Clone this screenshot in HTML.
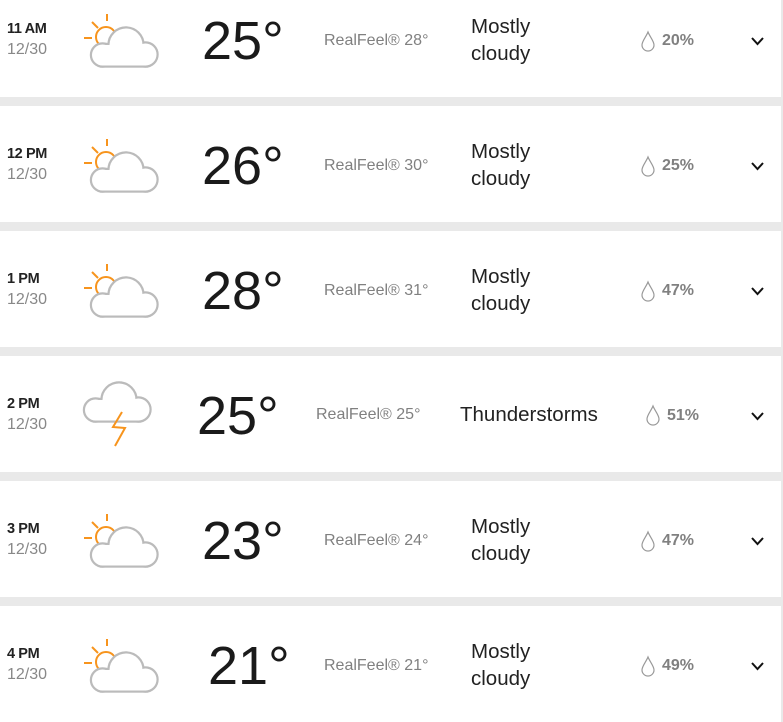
<!DOCTYPE html>
<html><head><meta charset="utf-8"><style>
body{margin:0;width:783px;height:703px;background:#e9e9e9;position:relative;overflow:hidden;font-family:"Liberation Sans",sans-serif}
.card{position:absolute;left:0;width:781px;height:116px;background:#fff}
.t{position:absolute;white-space:nowrap}
.time{left:7px;font-size:14.5px;font-weight:bold;color:#222;letter-spacing:-0.4px}
.date{left:7px;font-size:16px;color:#888}
.temp{font-size:54px;color:#1a1a1a;line-height:1}
.rf{font-size:16px;color:#808080}
.cond{font-size:20.5px;color:#222;line-height:27px}
.pct{font-size:16px;font-weight:bold;color:#808080}
svg{position:absolute;left:0;top:0}
</style></head><body>
<div class="card" style="top:-19px"></div>
<div class="card" style="top:106px"></div>
<div class="card" style="top:231px"></div>
<div class="card" style="top:356px"></div>
<div class="card" style="top:481px"></div>
<div class="card" style="top:606px"></div>

<div class="t time" style="top:21px">11 AM</div><div class="t date" style="top:41px">12/30</div>
<div class="t temp" style="left:202px;top:14px">25°</div>
<div class="t rf" style="left:324px;top:32px">RealFeel® 28°</div>
<div class="t cond" style="left:471px;top:13px">Mostly<br>cloudy</div>
<div class="t pct" style="left:662px;top:32px">20%</div>

<div class="t time" style="top:146px">12 PM</div><div class="t date" style="top:166px">12/30</div>
<div class="t temp" style="left:202px;top:139px">26°</div>
<div class="t rf" style="left:324px;top:157px">RealFeel® 30°</div>
<div class="t cond" style="left:471px;top:138px">Mostly<br>cloudy</div>
<div class="t pct" style="left:662px;top:157px">25%</div>

<div class="t time" style="top:271px">1 PM</div><div class="t date" style="top:291px">12/30</div>
<div class="t temp" style="left:202px;top:264px">28°</div>
<div class="t rf" style="left:324px;top:282px">RealFeel® 31°</div>
<div class="t cond" style="left:471px;top:263px">Mostly<br>cloudy</div>
<div class="t pct" style="left:662px;top:282px">47%</div>

<div class="t time" style="top:396px">2 PM</div><div class="t date" style="top:416px">12/30</div>
<div class="t temp" style="left:197px;top:389px">25°</div>
<div class="t rf" style="left:316px;top:406px">RealFeel® 25°</div>
<div class="t cond" style="left:460px;top:401px">Thunderstorms</div>
<div class="t pct" style="left:667px;top:407px">51%</div>

<div class="t time" style="top:521px">3 PM</div><div class="t date" style="top:541px">12/30</div>
<div class="t temp" style="left:202px;top:514px">23°</div>
<div class="t rf" style="left:324px;top:532px">RealFeel® 24°</div>
<div class="t cond" style="left:471px;top:513px">Mostly<br>cloudy</div>
<div class="t pct" style="left:662px;top:532px">47%</div>

<div class="t time" style="top:646px">4 PM</div><div class="t date" style="top:666px">12/30</div>
<div class="t temp" style="left:208px;top:639px">21°</div>
<div class="t rf" style="left:324px;top:657px">RealFeel® 21°</div>
<div class="t cond" style="left:471px;top:638px">Mostly<br>cloudy</div>
<div class="t pct" style="left:662px;top:657px">49%</div>

<svg width="783" height="703">
<defs>
<g id="cs">
<circle cx="20.5" cy="42" r="10.5"/><circle cx="44" cy="32" r="16.5"/><circle cx="63.5" cy="41.5" r="11"/><rect x="20" y="32" width="44" height="20.5"/>
</g>
<g id="cl">
<use href="#cs" fill="#bbb" stroke="#bbb" stroke-width="4.4"/>
<use href="#cs" fill="#fff"/>
</g>
<g id="mc">
<g stroke="#f7941d" stroke-width="2" fill="none">
<line x1="25" y1="1" x2="25" y2="8"/><line x1="10" y1="9" x2="16" y2="15"/><line x1="2" y1="25" x2="10" y2="25"/>
<circle cx="24" cy="24" r="10"/>
</g>
<use href="#cl"/>
</g>
<g id="dr"><path d="M7,0 C5,5 1,9 1,13 A6,6 0 0 0 13,13 C13,9 9,5 7,0 Z" fill="none" stroke="#999" stroke-width="1.2"/></g>
<g id="ch"><path d="M0,0 L5.5,6 L11,0" fill="none" stroke="#111" stroke-width="2"/></g>
</defs>
<use href="#mc" x="82" y="13"/><use href="#mc" x="82" y="138"/><use href="#mc" x="82" y="263"/>
<use href="#mc" x="82" y="513"/><use href="#mc" x="82" y="638"/>
<use href="#cl" x="75" y="368"/>
<path d="M122,412 L113,427 L125,428 L115,446" fill="none" stroke="#f7941d" stroke-width="2"/>
<use href="#dr" x="641" y="32"/><use href="#dr" x="641" y="157"/><use href="#dr" x="641" y="282"/>
<use href="#dr" x="646" y="406"/><use href="#dr" x="641" y="532"/><use href="#dr" x="641" y="657"/>
<use href="#ch" x="752" y="38"/><use href="#ch" x="752" y="163"/><use href="#ch" x="752" y="288"/>
<use href="#ch" x="752" y="413"/><use href="#ch" x="752" y="538"/><use href="#ch" x="752" y="663"/>
</svg>
</body></html>
